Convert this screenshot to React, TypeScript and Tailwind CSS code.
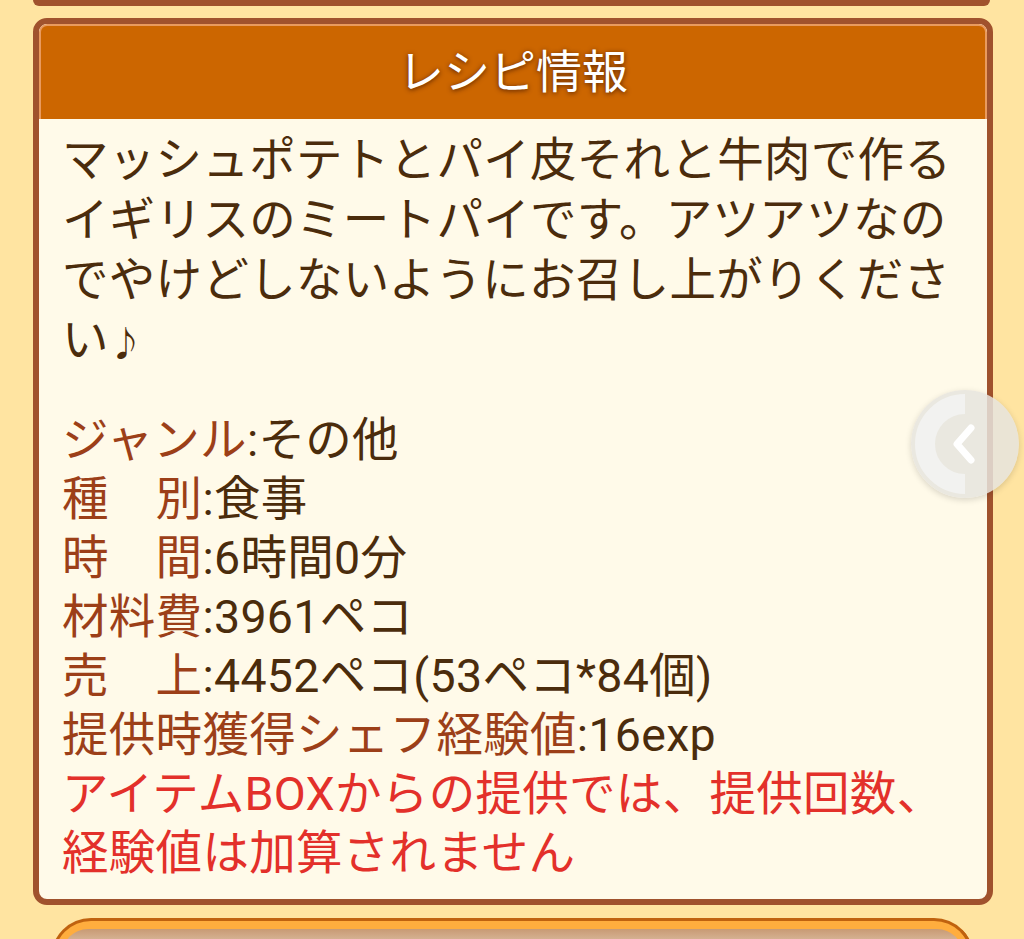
import React from "react";

const font = { fontFamily: "Roboto, 'Noto Sans CJK JP', sans-serif" };

const desc = [
  "マッシュポテトとパイ皮それと牛肉で作る",
  "イギリスのミートパイです。アツアツなの",
  "でやけどしないようにお召し上がりくださ",
];

const info = [
  { label: "ジャンル", value: "その他" },
  { label: "種　別", value: "食事" },
  { label: "時　間", value: "6時間0分" },
  { label: "材料費", value: "3961ペコ" },
  { label: "売　上", value: "4452ペコ(53ペコ*84個)" },
  { label: "提供時獲得シェフ経験値", value: "16exp" },
];

function SideButton() {
  return (
    <div className="absolute left-[911px] top-[390px] w-[108px] h-[108px] rounded-full bg-[#e6e4de]/85 shadow-[0_2px_6px_rgba(0,0,0,0.15)] flex items-center justify-center">
      <svg width="108" height="108" viewBox="0 0 108 108" fill="none">
        <path
          d="M54 14 A40 40 0 0 0 54 94"
          stroke="#f2f2f0"
          strokeWidth="20"
          strokeLinecap="butt"
        />
        <path
          d="M60 38 L46 54 L60 70"
          stroke="#ffffff"
          strokeWidth="7"
          strokeLinecap="round"
          strokeLinejoin="round"
        />
      </svg>
    </div>
  );
}

export default function App() {
  return (
    <div
      className="relative w-[1024px] h-[939px] overflow-hidden bg-[#ffe4a1] pl-[33px] pr-[31px]"
      style={font}
    >
      {/* previous card edge */}
      <div className="h-[6px] w-[957px] bg-[#a0522d] rounded-b-[12px]" />

      {/* recipe info card */}
      <div className="mt-[12px] h-[887px] rounded-[14px] border-[6px] border-[#a0522d] bg-[#fffae9] overflow-hidden">
        <div className="h-[95px] bg-[#cc6600] border-t-2 border-x-2 border-[#e99a5e] rounded-t-[8px] flex items-center justify-center">
          <span className="text-[46px] text-white leading-none pb-[2px] [text-shadow:0_1px_5px_rgba(80,30,0,0.95)]">
            レシピ情報
          </span>
        </div>
        <div className="px-[23px] pt-[11px] text-[46.5px] leading-[60px] tracking-[0.3px]">
          <div className="text-[#4b2c0c]">
            {desc.map((l) => (
              <div key={l} className="whitespace-nowrap">
                {l}
              </div>
            ))}
            <div className="whitespace-nowrap">
              い<span className="text-[34px]">♪</span>
            </div>
          </div>
          <div className="mt-[37px] leading-[59px]">
            {info.map((r) => (
              <div key={r.label} className="whitespace-nowrap">
                <span className="text-[#9c3f18]">{r.label}</span>
                <span className="text-[#4b2c0c]">:{r.value}</span>
              </div>
            ))}
            <div className="text-[#e3302a] whitespace-nowrap">アイテムBOXからの提供では、提供回数、</div>
            <div className="text-[#e3302a] whitespace-nowrap">経験値は加算されません</div>
          </div>
        </div>
      </div>

      {/* next card top */}
      <div className="mt-[13px] ml-[18px] w-[923px] h-[40px] rounded-t-[40px] border-[3px] border-[#c0620f] bg-[#ffad3e] px-[8px] pt-[8px]">
        <div className="h-full rounded-t-[30px] bg-gradient-to-b from-[#c89a74] to-[#e9d6c0]" />
      </div>

      <SideButton />
    </div>
  );
}
